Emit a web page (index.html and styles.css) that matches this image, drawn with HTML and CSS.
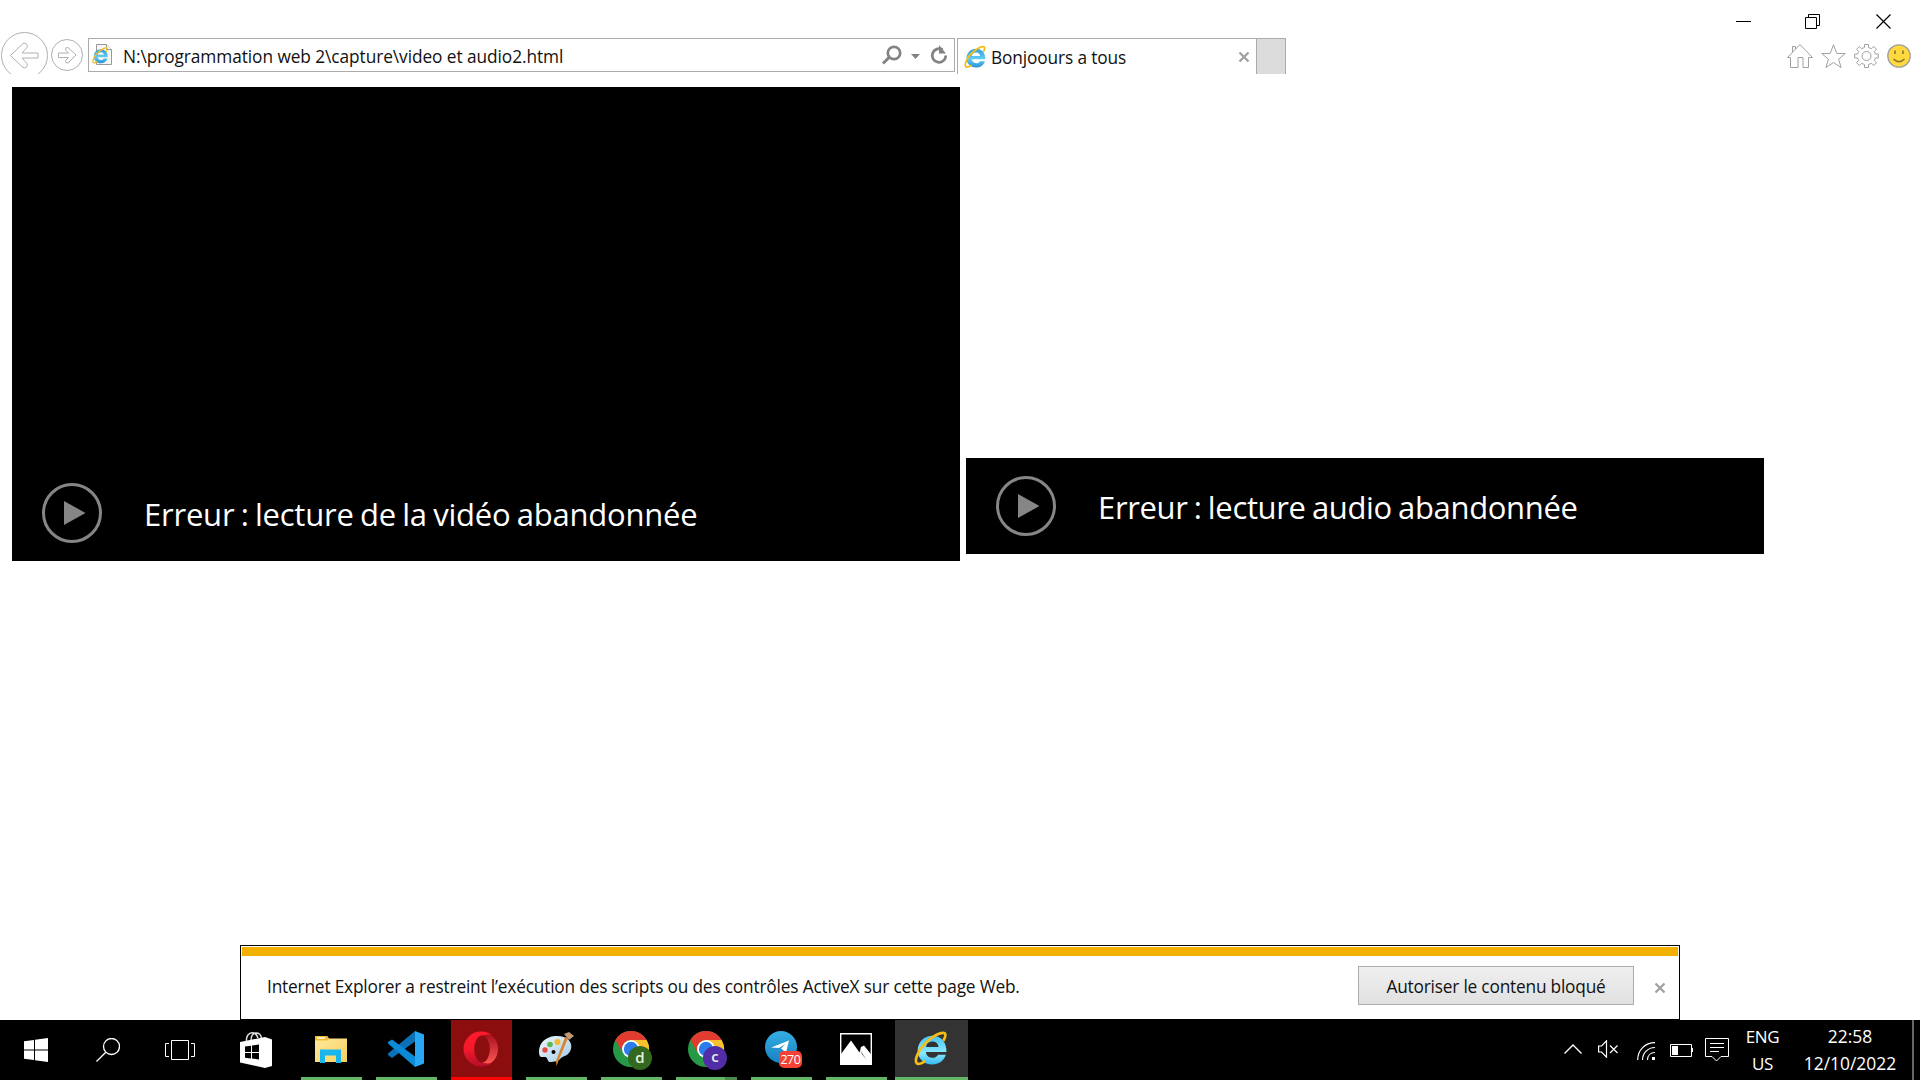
FILE: index.html
```html
<!DOCTYPE html>
<html lang="fr">
<head>
<meta charset="utf-8">
<title>Bonjoours a tous</title>
<link rel="stylesheet" href="styles.css">
</head>
<body>
<svg class="defs" width="0" height="0" aria-hidden="true">
  <defs>
    <linearGradient id="ieBlue" x1="0" y1="0" x2="0" y2="1"><stop offset="0" stop-color="#2d9fdc"/><stop offset=".55" stop-color="#62cdf5"/><stop offset="1" stop-color="#2792d3"/></linearGradient>
    <linearGradient id="ieBright" x1="0" y1="0" x2="0" y2="1"><stop offset="0" stop-color="#45c4f3"/><stop offset=".6" stop-color="#8be9ff"/><stop offset="1" stop-color="#35b9ee"/></linearGradient>
    <linearGradient id="folder" x1="0" y1="0" x2="1" y2="1"><stop offset="0" stop-color="#ffeaa0"/><stop offset="1" stop-color="#f5d060"/></linearGradient>
    <linearGradient id="opera" x1="0" y1="0" x2="0" y2="1"><stop offset="0" stop-color="#ff1b2d"/><stop offset=".5" stop-color="#f5182b"/><stop offset="1" stop-color="#b3102a"/></linearGradient>
    <linearGradient id="operaIn" x1="0" y1="0" x2="0" y2="1"><stop offset="0" stop-color="#a50d1d"/><stop offset="1" stop-color="#ff5a55"/></linearGradient>
    <linearGradient id="palette" x1="0" y1="0" x2="1" y2="1"><stop offset="0" stop-color="#eef7fc"/><stop offset="1" stop-color="#a3cbe6"/></linearGradient>
    <linearGradient id="tg" x1="0" y1="0" x2="0" y2="1"><stop offset="0" stop-color="#36aee2"/><stop offset="1" stop-color="#1681c2"/></linearGradient>
    <symbol id="ie" viewBox="0 0 34 34">
      <path d="M31.5 20.5H11.6c.3 3.500 2.900 5.600 6.300 5.600 2.600 0 4.500-1 5.500-3h7.500c-1.700 6-6.900 9.400-13.300 9.400-8.100 0-14-5.400-14-13.500S9.700 4.700 17.700 4.700c8.500 0 14.200 6 13.800 15.800zM11.700 15.600h12.100c-.3-3.200-2.500-5.300-5.900-5.300s-5.700 2.100-6.200 5.300z"/>
      <path fill="none" stroke="#f6bd16" stroke-width="2.600" d="M28.500 9.500c2-3.500 2.600-5.800 1.500-7.200C27 .5 18 4.500 10.500 12.300 3.500 19.700.3 28.400 2.600 31.200c1.200 1.400 4.400.5 8.300-1.900"/>
    </symbol>
    <symbol id="chrome" viewBox="0 0 40 40">
      <circle cx="18" cy="18" r="18" fill="#279847"/>
      <path fill="#fbc02d" d="M18 9h15.600A18 18 0 0 1 18 36l8-14z"/>
      <path fill="#e23b30" d="M2.400 9A18 18 0 0 1 33.600 9H18a9 9 0 0 0-8 13z"/>
      <circle cx="18" cy="18" r="9" fill="#fff"/>
      <circle cx="18" cy="18" r="7.200" fill="#2b7cec"/>
    </symbol>
    <symbol id="cross" viewBox="0 0 12 12"><path d="M1.500 1.500l9 9m0-9l-9 9" fill="none" stroke="#a3a3a3" stroke-width="2.400"/></symbol>
    <symbol id="play" viewBox="0 0 60 60"><circle cx="30" cy="30" r="28.500" fill="none" stroke="#868686" stroke-width="3"/><path d="M22 18v24l21.500-12z" fill="#868686"/></symbol>
  </defs>
</svg>

<div class="screen">
  <header class="browser">
    <div class="window-controls">
      <svg width="16" height="16"><path d="M0 7.500h15" stroke="#000"/></svg>
      <svg width="16" height="16" fill="none" stroke="#000"><path d="M.5 3.500h11v11H.5zM3.500 3.500v-3h11v11h-3"/></svg>
      <svg width="16" height="16"><path d="M.5.500l14 14m0-14l-14 14" stroke="#000" stroke-width="1.200"/></svg>
    </div>
    <nav class="toolbar">
      <svg class="back" width="48" height="42" fill="none" stroke="#b0b0b0"><circle cx="23.500" cy="23.500" r="23" /><path d="M9.500 23.500L22 11.500q2-1 3.500.5t.5 3.500l-5 5.500h16v5H21l5 5.500q1 2-.5 3.500t-3.500.500z"/></svg>
      <svg class="forward" width="32" height="34" fill="none" stroke="#b0b0b0"><circle cx="16" cy="16" r="15.500"/><path d="M25 16L17 8.500q-3-.5-2.500 2.500l3 3H7.500v4.500h10l-3 3q-.5 3 2.500 2.500z"/></svg>
      <div class="address">
        <svg width="22" height="24" viewBox="0 0 22 24"><path d="M4.500 1.500h10l5 5v15h-15z" fill="#f7f7f7" stroke="#999"/><path d="M14.500 1.500v5h5" fill="#fff" stroke="#999"/><use href="#ie" x="0" y="4" width="17" height="17" fill="url(#ieBlue)"/></svg>
        <span class="url">N:\programmation web 2\capture\video et audio2.html</span>
        <svg class="tools" width="66" height="22" fill="none" stroke="#838383"><circle cx="12" cy="8" r="6.200" stroke-width="2.700"/><path d="M7.500 12L1 18.500" stroke-width="3"/><path d="M29 9h9l-4.500 5z" fill="#838383" stroke="none"/><path d="M60.500 4.700A6.800 6.800 0 1 0 63.800 10.500" stroke-width="2.800"/><path d="M57 0v8.500h7z" fill="#838383" stroke="none"/></svg>
      </div>
      <div class="tab">
        <svg width="23" height="24" fill="url(#ieBlue)"><use href="#ie" width="23" height="24"/></svg>
        <span class="tab-title">Bonjoours a tous</span>
        <svg class="tab-close" width="12" height="12"><use href="#cross"/></svg>
      </div>
      <div class="new-tab"></div>
      <div class="actions">
        <svg width="26" height="24" fill="none" stroke="#a0a0a0"><path d="M.500 13.500L13 .5l12.500 13h-4v10h-5.500v-10h-5v10H3.500v-10zM5.500 8V2.500h3v2.500"/></svg>
        <svg width="25" height="24" fill="none" stroke="#a0a0a0"><path d="M12.500.800l3.300 8.700h8.500l-6.700 5.600 2.500 8.400-7.600-5-7.600 5 2.500-8.400L.7 9.500h8.500z"/></svg>
        <svg width="25" height="24" viewBox="-12.500 -12 25 24" fill="none" stroke="#a0a0a0"><circle r="4.500"/><path d="M-2-11.500h4v3l3 1.200 2.200-2.200 2.800 2.800-2.200 2.200L9-2h2.800v4H9l-1.200 2.500L10 6.700 7.200 9.500 5 7.300 2 8.500v3h-4v-3l-3-1.200-2.200 2.200L-10 6.700l2.200-2.200L-9 2h-2.800v-4H-9l1.200-2.500L-10-6.700l2.800-2.800L-5-7.300l3-1.200z"/></svg>
        <svg width="24" height="24"><circle cx="12" cy="12" r="11.200" fill="#ffd93e" stroke="#a0a0a0" stroke-width="1.300"/><path d="M8 6.500v3.500m8-3.500v3.500" stroke="#8a7430" stroke-width="1.600"/><path d="M6.500 15q5.500 5.500 11 0" fill="none" stroke="#8a7430" stroke-width="1.500"/></svg>
      </div>
    </nav>
  </header>

  <main class="page">
    <div class="media video"><svg width="60" height="60"><use href="#play"/></svg><span class="video-error">Erreur : lecture de la vidéo abandonnée</span></div>
    <div class="media audio"><svg width="60" height="60"><use href="#play"/></svg><span class="audio-error">Erreur : lecture audio abandonnée</span></div>
  </main>

  <section class="notice">
    <div class="notice-stripe"></div>
    <div class="notice-body">
      <span class="notice-text">Internet Explorer a restreint l’exécution des scripts ou des contrôles ActiveX sur cette page Web.</span>
      <button class="allow"><span>Autoriser le contenu bloqué</span></button>
      <svg class="notice-close" width="12" height="12"><use href="#cross"/></svg>
    </div>
  </section>

  <footer class="taskbar">
    <div class="sys"><svg width="24" height="24" fill="#fff"><path d="M0 3.300l10-1.300v9.500H0zM11 1.800L24 0v11.500H11zM0 12.500h10V22L0 20.700zM11 12.500h13V24l-13-1.800z"/></svg></div>
    <div class="sys"><svg width="24" height="24" fill="none" stroke="#fff" stroke-width="1.300"><circle cx="15.500" cy="8.500" r="8"/><path d="M9.800 14.200L.5 23.500"/></svg></div>
    <div class="sys"><svg width="30" height="20" fill="none" stroke="#fff"><path d="M6.500.5h17v19h-17zM4 3.500H.500v13H4M26 3.500h3.500v13H26"/></svg></div>
    <div class="sys store"><svg width="32" height="36"><path d="M6.500 9C6 4 9 .8 12 .8S17 3 18 6M11 9c0-5 2-8 5-8s5 2 5.500 5" fill="none" stroke="#ddd" stroke-width="1.500"/><path d="M0 10L25 5l7 2.500V34l-7 2L0 30.500z" fill="#fff"/><path d="M5 14.500l6-.8V20H5zM12 13.500l7-1V20h-7zM5 21h6v5.500l-6-.8zM12 21h7v6.500l-7-1z" fill="#000"/></svg></div>

    <div class="app"><svg width="36" height="36"><path d="M2 5h12l2 2.500h18V31H2z" fill="url(#folder)"/><path d="M2 5h12l2 3-2 1.500H2z" fill="#f4bd27"/><path d="M4 7h8" stroke="#fff" stroke-width="1.500"/><path d="M7 32V18.500h21V32h-5v-7.500H12V32z" fill="#19b6ee"/></svg></div>
    <div class="app"><svg width="36" height="36"><path d="M27 0v10.500L4 27 0 24v-1.500z" fill="#0b70b6"/><path d="M0 12.500V11l4-2.500L27 25.500V36z" fill="#0b8ad8"/><path d="M27 0l9 3.500v29L27 36z" fill="#28a7f3"/></svg></div>
    <div class="app opera"><svg width="36" height="36"><ellipse cx="21.500" cy="18" rx="13.500" ry="16" fill="url(#operaIn)"/><path fill="url(#opera)" d="M18 .5A17.500 17.500 0 0 0 18 35.500C23 35.500 26 34 28.500 32 21 34 13 30 11.500 18 13 6 21 2 28.500 4 26 2 23 .5 18 .5z"/><ellipse cx="19" cy="18" rx="7.800" ry="13.500" fill="#8b0d0d"/></svg></div>
    <div class="app paint"><svg width="38" height="36"><path d="M17 5C28 4 35 10 33 18c-2 7-8 7-10 9-2 3-7 4-11 4-3 0-2-5-5-5s-6 1-6-5C1 12 7 6 17 5z" fill="url(#palette)"/><circle cx="7" cy="19" r="2.700" fill="#e44c42"/><circle cx="12" cy="13.500" r="2.800" fill="#61b656"/><circle cx="19.500" cy="11" r="3" fill="#f5b82f"/><circle cx="15.500" cy="21" r="2" fill="#000"/><path d="M30 7L20 31l-1.500 4-.5-5L27 6z" fill="#d98630"/><path d="M26 3l5-2 5 4-5 4z" fill="#c09772"/></svg></div>
    <div class="app"><svg width="40" height="40" class="profile"><use href="#chrome"/><circle cx="27" cy="27" r="12" fill="#33691e"/><text x="27" y="32" class="badge-letter">d</text></svg></div>
    <div class="app grouped"><svg width="40" height="40" class="profile"><use href="#chrome"/><circle cx="27" cy="27" r="12" fill="#512da8"/><text x="27" y="31" class="badge-letter">c</text></svg></div>
    <div class="app"><svg width="38" height="38" class="telegram"><circle cx="16" cy="16" r="16" fill="url(#tg)"/><path d="M6 16.500L24 9.500l-3 12-5-4 4.500-4.500-6.500 4z" fill="#fff"/><rect x="14" y="20" width="23" height="17" rx="5" fill="#f44336"/><text x="25.500" y="33" class="count">270</text></svg></div>
    <div class="app"><svg width="32" height="32"><path d="M.7.700h30.600v30.600H.7z" fill="#000" stroke="#fff" stroke-width="1.400"/><path d="M1 21L11 7.500l8.500 12L21 14l3-1.500 8 10V32H1z" fill="#fff"/><path d="M20 17l6.500 10L22 21z" fill="#000"/></svg></div>
    <div class="app active"><svg width="35" height="35" fill="url(#ieBright)"><use href="#ie"/></svg></div>

    <div class="tray">
      <svg width="18" height="10" fill="none" stroke="#fff" stroke-width="1.400"><path d="M.5 9.500L9 1l8.500 8.500"/></svg>
      <svg width="20" height="18" fill="none" stroke="#fff" stroke-width="1.200"><path d="M.6 6h3L8.500.8v16.400L3.600 12h-3zM12 5.500l7.500 7.500m0-7.500L12 13"/></svg>
      <svg width="18" height="18" fill="none" stroke="#fff" stroke-width="1.200"><path d="M.7 18C.7 8 8 .7 18 .7M5.500 18C5.500 11 11 5.500 18 5.500M10.500 18c0-4.500 3-7.500 7.500-7.500" /><path d="M15 15h3v3h-3z" fill="#fff" stroke="none"/></svg>
      <svg width="23" height="13"><path d="M.5.500h21v12H.500z" fill="none" stroke="#fff"/><path d="M2 2h6v9H2zM22 4h1v4h-1z" fill="#fff"/></svg>
      <svg width="24" height="24" fill="none" stroke="#fff"><path d="M.5.500h23v18H16L11.500 23 7 18.500H.500zM5 5.500h14M5 9.500h14M5 13.500h9"/></svg>
      <div class="stack lang"><span>ENG</span><span>US</span></div>
      <div class="stack clock"><span>22:58</span><span>12/10/2022</span></div>
    </div>
    <div class="peek"></div>
  </footer>
</div>
</body>
</html>
```
FILE: styles.css
```css
* { box-sizing: border-box; }
body { margin: 0; background: #fff; color: #111; font: 17.3px/24px "Open Sans", "Noto Sans", sans-serif; }
svg { display: block; flex: none; }
span { white-space: nowrap; }
.defs { position: absolute; }
.screen { width: 1920px; height: 1080px; display: flex; flex-direction: column; overflow: hidden; }

.browser { height: 74px; flex: none; }
.window-controls { height: 32px; padding: 14px 28px 0 0; display: flex; justify-content: flex-end; gap: 55px; }
.window-controls svg:first-child { margin-right: -2px; }
.toolbar { height: 42px; display: flex; align-items: flex-start; }
.back { margin-left: 1px; }
.forward { margin: 7px 0 0 2px; }
.address { width: 867px; height: 34px; margin: 6px 0 0 5px; padding: 0 6px 0 3px; border: 1px solid #ababab; display: flex; align-items: center; }
.url { margin-left: 9px; padding-top: 4px; letter-spacing: -.07px; }
.tools { margin-left: auto; margin-top: 1px; }
.tab { width: 300px; height: 36px; margin: 6px 0 0 2px; padding-left: 6px; border: solid #ababab; border-width: 1px 1px 0; display: flex; align-items: center; }
.tab-title { margin-left: 4px; padding-top: 3px; letter-spacing: -.13px; }
.tab-close { margin: 0 6px 0 auto; }
.new-tab { width: 29px; height: 36px; margin-top: 6px; background: #dcdcdc; border: solid #ababab; border-width: 1px 1px 0 0; }
.actions { margin: 12px 9px 0 auto; display: flex; gap: 8px; }

.page { height: 871px; flex: none; padding: 13px 0 0 12px; display: flex; align-items: flex-start; gap: 6px; color: #fff; font-size: 31px; line-height: 40px; }
.media { background: #000; display: flex; align-items: flex-end; }
.media span { margin-left: 42px; word-spacing: -1.5px; }
.video { width: 948px; height: 474px; padding: 0 30px 18px; }
.audio { width: 798px; height: 96px; margin-top: 371px; padding: 0 30px 18px; }
.media .video-error { margin-bottom: 9px; letter-spacing: -.22px; }
.media .audio-error { margin-bottom: 9px; letter-spacing: -.34px; }

.notice { width: 1440px; height: 75px; margin-left: 240px; flex: none; padding: 1px; border: 1px solid #000; background: #fff; }
.notice-stripe { height: 9px; background: #f2b100; }
.notice-body { height: 62px; padding: 0 12px 2px 25px; display: flex; align-items: center; }
.notice-text { padding-top: 2px; letter-spacing: -.18px; }
.allow { width: 276px; height: 39px; margin: -1px 20px 0 auto; padding: 0; border: 1px solid #ababab; background: linear-gradient(#efefef, #e1e1e1); color: #111; font: inherit; letter-spacing: -.2px; }
.allow span { position: relative; top: 1px; }
.notice-close { margin-top: 4px; }

.taskbar { height: 60px; flex: none; display: flex; background: #000; color: #fff; }
.sys { width: 72px; display: flex; align-items: center; justify-content: center; }
.store { width: 78px; padding-left: 2px; }
.app { width: 61px; margin: 0 7px; display: flex; align-items: center; justify-content: center; border-bottom: 3px solid #63b663; padding: 3px 1px 0 0; }
.app svg { margin-top: -3px; }
.opera { background: #8b0d0d; border-bottom-color: #f00; }
.paint { padding-right: 0; padding-left: 1px; }
.grouped { border-image: linear-gradient(90deg, #63b663 47px, #4b8a4b 47px) 3; border-width: 0 0 3px; border-style: solid; }
.active { width: 73px; margin: 0 1px; background: #333; }
.app .profile { margin: 1px 0 0 3px; }
.app .telegram { margin: 0 0 0 5px; }
.badge-letter { font: 600 15px "Open Sans", sans-serif; fill: #e8f0e4; text-anchor: middle; }
.count { font: 12.5px "Open Sans", sans-serif; letter-spacing: -.4px; fill: #fff; text-anchor: middle; }
.tray { margin-left: auto; display: flex; align-items: center; }
.tray svg { margin-right: 12px; }
.tray svg:first-child { margin-right: 16px; margin-top: -3px; }
.tray svg:nth-child(2) { margin-right: 19px; margin-top: -2px; }
.tray svg:nth-child(3) { margin-right: 15px; margin-top: 2px; }
.stack { display: flex; flex-direction: column; align-items: center; line-height: 27px; font-size: 17px; }
.lang { width: 43px; letter-spacing: -.3px; }
.clock { width: 96px; margin: 0 14px 0 18px; font-size: 17.4px; }
.peek { width: 8px; border-left: 2px solid #666; }
```
